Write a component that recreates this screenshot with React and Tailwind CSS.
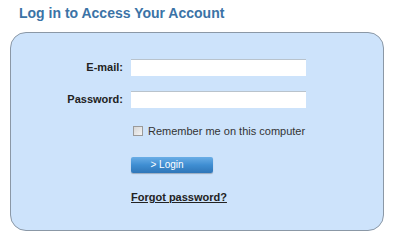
import React from 'react'

export default function App(){
  return (
    <div className="h-[233px] w-[395px] bg-white font-['Liberation_Sans',Arial,sans-serif]">
      <h1 className="pl-[19px] pt-[5px] text-[14px] font-bold leading-[17px] text-[#3b73a6]">Log in to Access Your Account</h1>
      <div className="ml-[10px] mt-[10px] h-[199px] w-[374px] rounded-[16px] border border-[#8b98a6] bg-[#cde3fb]">
        <div className="grid grid-cols-[112px_175px] items-center gap-x-[8px] gap-y-[15px] pt-[26px]">
          <label className="text-right text-[11px] font-bold leading-[17px] text-[#222]">E-mail:</label>
          <input className="h-[17px] border-t border-[#b9c3cc] bg-white outline-none" />
          <label className="text-right text-[11px] font-bold leading-[17px] text-[#222]">Password:</label>
          <input type="password" className="h-[17px] border-t border-[#b9c3cc] bg-white outline-none" />
        </div>
        <div className="ml-[122px] mt-[16px] flex h-[14px] items-center gap-[5px]">
          <span className="h-[10px] w-[10px] border border-[#9a9a9a] bg-gradient-to-br from-[#d6d6d6] to-[#f4f4f4]" />
          <span className="text-[11px] leading-[14px] text-[#333]">Remember me on this computer</span>
        </div>
        <button className="ml-[120px] mt-[19px] block h-[16px] w-[82px] rounded-[2px] bg-gradient-to-b from-[#6aaee6] via-[#3f8ed2] to-[#2f76b8] pr-[10px] text-center text-[10px] leading-[16px] text-white shadow-[0_1px_1px_rgba(0,0,0,0.25)]">&gt; Login</button>
        <div className="ml-[120px] mt-[17px] text-[11px] font-bold leading-[14px] text-[#222] underline">Forgot password?</div>
      </div>
    </div>
  )
}
